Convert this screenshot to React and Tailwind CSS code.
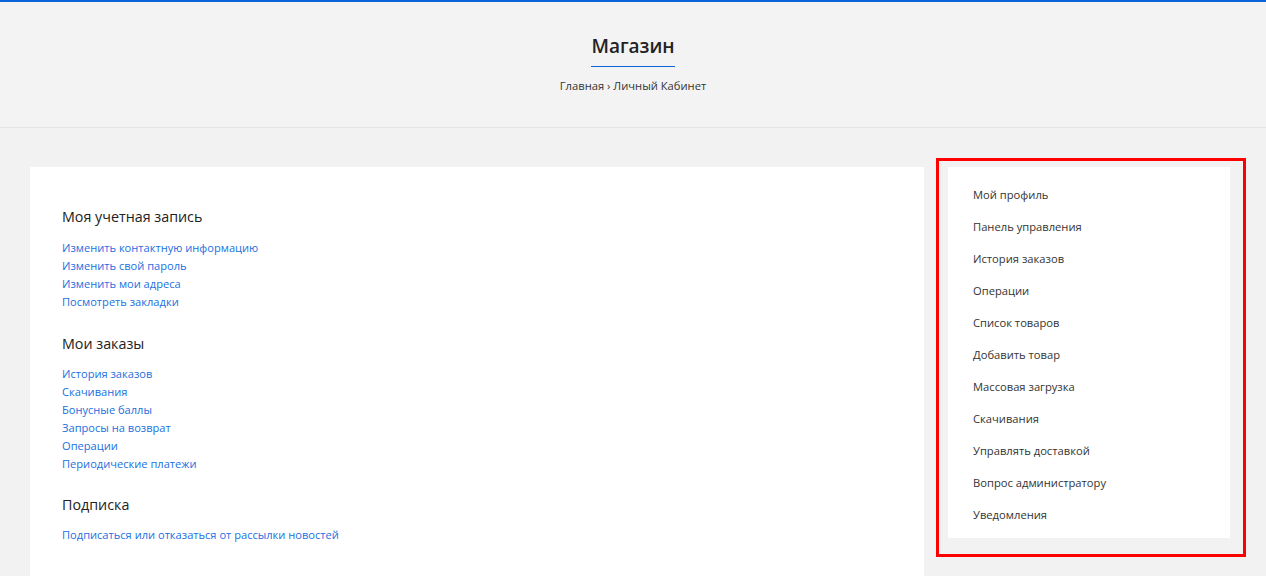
export default function App() {
  const accountLinks = [
    "Изменить контактную информацию",
    "Изменить свой пароль",
    "Изменить мои адреса",
    "Посмотреть закладки",
  ];
  const orderLinks = [
    "История заказов",
    "Скачивания",
    "Бонусные баллы",
    "Запросы на возврат",
    "Операции",
    "Периодические платежи",
  ];
  const menu = [
    "Мой профиль",
    "Панель управления",
    "История заказов",
    "Операции",
    "Список товаров",
    "Добавить товар",
    "Массовая загрузка",
    "Скачивания",
    "Управлять доставкой",
    "Вопрос администратору",
    "Уведомления",
  ];

  return (
    <div
      className="min-h-[576px] bg-[#f2f2f2] text-[#333] overflow-hidden"
      style={{ fontFamily: '"Open Sans", "Noto Sans", sans-serif' }}
    >
      {/* HEADER */}
      <div className="h-[128px] border-t-[2px] border-[#0b63db] border-b border-b-[#e3e3e3] bg-[#f3f3f3] flex flex-col items-center">
        <h1 className="mt-[30px] text-[19px] font-semibold leading-[28px] text-[#222]">Магазин</h1>
        <div className="mt-[6px] w-[84px] h-[1px] bg-[#0b63db]" />
        <div className="mt-[11px] text-[11.2px] leading-[16px] text-[#333]">
          Главная › Личный Кабинет
        </div>
      </div>

      {/* CONTENT */}
      <div className="flex gap-[24px] pl-[30px] pt-[39px]">
        <div className="w-[894px] bg-white px-[32px] pt-[39px] pb-[40px]">
          <h2 className="text-[14.3px] leading-[22px] text-[#222]">Моя учетная запись</h2>
          <ul className="mt-[11px]">
            {accountLinks.map((l) => (
              <li key={l} className="text-[11.1px] leading-[18px] text-[#1a6fdf]">{l}</li>
            ))}
          </ul>
          <h2 className="mt-[22px] text-[14.3px] leading-[22px] text-[#222]">Мои заказы</h2>
          <ul className="mt-[10px]">
            {orderLinks.map((l) => (
              <li key={l} className="text-[11.1px] leading-[18px] text-[#1a6fdf]">{l}</li>
            ))}
          </ul>
          <h2 className="mt-[21px] text-[14.3px] leading-[22px] text-[#222]">Подписка</h2>
          <ul className="mt-[10px]">
            <li className="text-[11.1px] leading-[18px] text-[#1a6fdf]">
              Подписаться или отказаться от рассылки новостей
            </li>
          </ul>
        </div>

        <div className="relative self-start">
          <div className="w-[282px] bg-white px-[25px] pt-[12px] pb-[7px]">
            {menu.map((m) => (
              <div key={m} className="h-[32px] flex items-center text-[11.2px] text-[#333]">{m}</div>
            ))}
          </div>
          <div className="absolute left-[-12px] top-[-9px] w-[310px] h-[399px] border-[3px] border-[#f00] pointer-events-none" />
        </div>
      </div>
    </div>
  );
}
